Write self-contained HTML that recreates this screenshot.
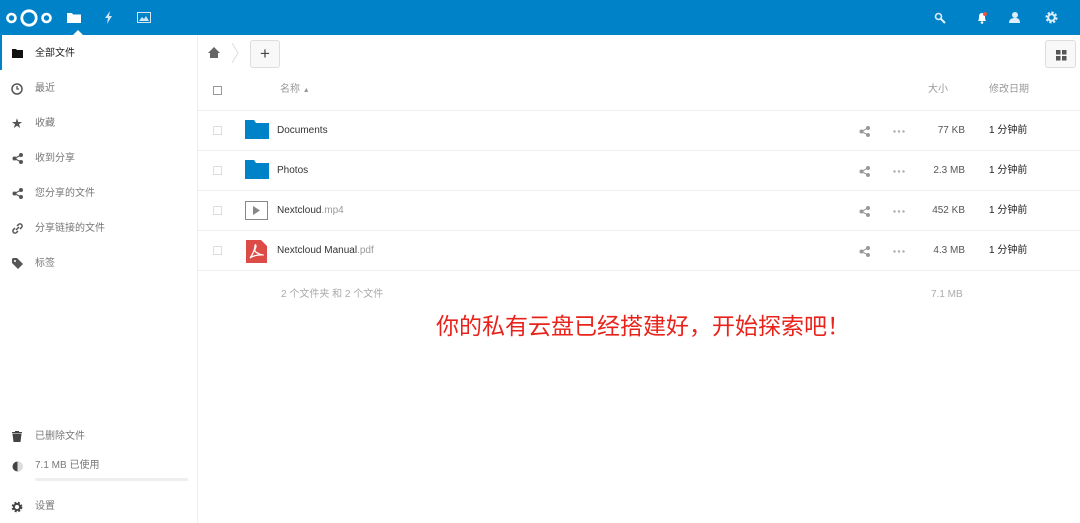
<!DOCTYPE html>
<html><head><meta charset="utf-8"><style>
*{margin:0;padding:0;box-sizing:border-box}
body{width:1080px;height:523px;overflow:hidden;background:#fff;font-family:"Liberation Sans","Noto Sans CJK SC",sans-serif;font-size:10px;line-height:12px;color:#333;position:relative}
.hdr{position:absolute;left:0;top:0;width:1080px;height:35px;background:#0082c9}
.side{position:absolute;left:0;top:35px;width:198px;height:488px;border-right:1px solid #eee}
.nav{position:absolute;left:0;height:35px;width:197px;display:flex;align-items:center;color:#777;padding-top:2px}
.nav .ic{width:12px;height:12px;margin-left:11px;margin-right:12px;display:flex;align-items:center;justify-content:center;color:#555;font-size:11px}
.abs{position:absolute}
.row{position:absolute;left:198px;width:882px;height:40px;border-bottom:1px solid #eee}
.cb{position:absolute;left:15px;top:15px;width:9px;height:9px;border:1px solid #ddd}
.nm{position:absolute;left:79px;top:13px;font-size:10px;color:#333;line-height:14px}
.sz{position:absolute;right:115px;top:13px;color:#555;line-height:14px}
.dt{position:absolute;left:791px;top:13px;color:#222;line-height:14px}
.gr{color:#999}
</style></head><body>
<div class="hdr">
<svg class="abs" style="left:4px;top:8px" width="50" height="20" viewBox="0 0 50 20"><circle cx="7.5" cy="10" r="4" fill="none" stroke="#fff" stroke-width="2.6"/><circle cx="25" cy="10" r="7.2" fill="none" stroke="#fff" stroke-width="2.8"/><circle cx="42.5" cy="10" r="4" fill="none" stroke="#fff" stroke-width="2.6"/></svg>
<svg class="abs" style="left:67px;top:12px" width="14" height="11"><path d="M0 1h5l1 1.5h8V11H0z" fill="#fff"/></svg>
<svg class="abs" style="left:73px;top:30px" width="10" height="5"><path d="M0 5L5 0L10 5z" fill="#fff"/></svg>
<svg class="abs" style="left:104px;top:11px" width="9" height="13"><path d="M6 0L1 7h3L3 13l5-8H5z" fill="#cfe6f4"/></svg>
<svg class="abs" style="left:137px;top:12px" width="14" height="11"><rect x="0.5" y="0.5" width="13" height="10" fill="none" stroke="#cfe6f4"/><path d="M2 9l3-4 2 2 2-3 3 5z" fill="#cfe6f4"/></svg>
<svg class="abs" style="left:934px;top:12px" width="12" height="12"><circle cx="4.5" cy="4.5" r="3" fill="none" stroke="#dbeefa" stroke-width="1.6"/><path d="M7 7l4 4" stroke="#dbeefa" stroke-width="2"/></svg>
<svg class="abs" style="left:976px;top:12px" width="12" height="12"><path d="M2 9c1-1 1-3 1-5a3 3 0 016 0c0 2 0 4 1 5z" fill="#fff"/><circle cx="6" cy="10.5" r="1.3" fill="#fff"/><circle cx="9" cy="2" r="2" fill="#e9573f"/></svg>
<svg class="abs" style="left:1008px;top:11px" width="13" height="13"><circle cx="7" cy="4" r="3" fill="#dbeefa"/><path d="M1 12c0-4 3-5 6-5s5 1 5 5z" fill="#dbeefa"/></svg>
<svg class="abs" style="left:1045px;top:11px" width="13" height="13" viewBox="0 0 13 13"><circle cx="6.5" cy="6.5" r="4.5" fill="none" stroke="#dbeefa" stroke-width="3" stroke-dasharray="2 1.5"/><circle cx="6.5" cy="6.5" r="3.3" fill="none" stroke="#dbeefa" stroke-width="2"/></svg>
</div>
<div class="side">
<div class="abs" style="left:0;top:0;width:2px;height:35px;background:#0082c9"></div>
<div class="nav" style="top:0;color:#222"><span class="ic"><svg width="11" height="9"><path d="M0 0h4l1 1h6v8H0z" fill="#111"/></svg></span>全部文件</div>
<div class="nav" style="top:35px"><span class="ic"><svg width="12" height="12"><circle cx="6" cy="6" r="5" fill="none" stroke="#555" stroke-width="1.5"/><path d="M6 3v3h2" stroke="#555" fill="none" stroke-width="1.3"/></svg></span>最近</div>
<div class="nav" style="top:70px"><span class="ic">★</span>收藏</div>
<div class="nav" style="top:105px"><span class="ic"><svg width="11" height="11"><circle cx="2.5" cy="5.5" r="2" fill="#555"/><circle cx="9" cy="2" r="2" fill="#555"/><circle cx="9" cy="9" r="2" fill="#555"/><path d="M2.5 5.5L9 2M2.5 5.5L9 9" stroke="#555"/></svg></span>收到分享</div>
<div class="nav" style="top:140px"><span class="ic"><svg width="11" height="11"><circle cx="2.5" cy="5.5" r="2" fill="#555"/><circle cx="9" cy="2" r="2" fill="#555"/><circle cx="9" cy="9" r="2" fill="#555"/><path d="M2.5 5.5L9 2M2.5 5.5L9 9" stroke="#555"/></svg></span>您分享的文件</div>
<div class="nav" style="top:175px"><span class="ic"><svg width="11" height="11"><path d="M4 7l3-3M3 5L1.5 6.5a2 2 0 003 3L6 8M5 3l1.5-1.5a2 2 0 013 3L8 6" stroke="#555" fill="none" stroke-width="1.5"/></svg></span>分享链接的文件</div>
<div class="nav" style="top:210px"><span class="ic"><svg width="11" height="11"><path d="M0 1v4l6 6 5-5-6-6H1z" fill="#555"/><circle cx="3" cy="3" r="1" fill="#fff"/></svg></span>标签</div>
<div class="nav" style="top:383px"><span class="ic"><svg width="10" height="11"><path d="M0 1.5h10M3.5 1V0h3v1M1 3h8l-1 8H2z" stroke="#444" fill="#444"/></svg></span>已删除文件</div>
<div class="nav" style="top:415px;height:30px;align-items:center"><span class="ic"><svg width="11" height="11"><circle cx="5.5" cy="5.5" r="5" fill="#444"/><path d="M5.5 .5a5 5 0 010 10z" fill="#ddd"/></svg></span>7.1 MB 已使用</div>
<div class="abs" style="left:35px;top:443px;width:153px;height:3px;background:#eee;border-radius:2px"></div>
<div class="nav" style="top:453px"><span class="ic"><svg width="12" height="12" viewBox="0 0 13 13"><circle cx="6.5" cy="6.5" r="4.3" fill="none" stroke="#444" stroke-width="3" stroke-dasharray="2 1.5"/><circle cx="6.5" cy="6.5" r="3.3" fill="none" stroke="#444" stroke-width="2"/></svg></span>设置</div>
</div>
<svg class="abs" style="left:208px;top:47px" width="12" height="11"><path d="M6 0L0 6h2v5h8V6h2z" fill="#666"/></svg>
<svg class="abs" style="left:231px;top:43px" width="8" height="20"><path d="M1 0l6 10-6 10" stroke="#ddd" fill="none"/></svg>
<div class="abs" style="left:250px;top:40px;width:30px;height:28px;border:1px solid #ddd;border-radius:3px;background:#f8f8f8;text-align:center;line-height:26px;font-size:17px;color:#444">+</div>
<div class="abs" style="left:1045px;top:40px;width:31px;height:28px;border:1px solid #ddd;border-radius:3px;background:#f8f8f8"><svg style="margin:9px 0 0 10px" width="11" height="11"><rect width="4.5" height="4.5" fill="#555"/><rect x="6" width="4.5" height="4.5" fill="#555"/><rect y="6" width="4.5" height="4.5" fill="#555"/><rect x="6" y="6" width="4.5" height="4.5" fill="#555"/></svg></div>
<div class="row" style="top:70px;height:41px"><div class="cb" style="top:16px;border-color:#999"></div><div class="abs gr" style="left:82px;top:13px;line-height:14px">名称 <span style="font-size:7px">▲</span></div><div class="abs gr" style="left:730px;top:13px;line-height:14px">大小</div><div class="abs gr" style="left:791px;top:13px;line-height:14px">修改日期</div></div>
<div class="row" style="top:111px"><div class="cb"></div><svg class="abs" style="left:47px;top:9px" width="24" height="19"><path d="M0 0h9l2 3h13v16H0z" fill="#0082c9"/></svg><div class="nm">Documents</div><svg class="abs" style="left:661px;top:15px" width="12" height="11"><circle cx="2.5" cy="5.5" r="2" fill="#999"/><circle cx="9" cy="2" r="2" fill="#999"/><circle cx="9" cy="9" r="2" fill="#999"/><path d="M2.5 5.5L9 2M2.5 5.5L9 9" stroke="#999"/></svg><svg class="abs" style="left:695px;top:19px" width="12" height="3"><circle cx="1.5" cy="1.5" r="1.2" fill="#aaa"/><circle cx="6" cy="1.5" r="1.2" fill="#aaa"/><circle cx="10.5" cy="1.5" r="1.2" fill="#aaa"/></svg><div class="sz">77 KB</div><div class="dt">1 分钟前</div></div>
<div class="row" style="top:151px"><div class="cb"></div><svg class="abs" style="left:47px;top:9px" width="24" height="19"><path d="M0 0h9l2 3h13v16H0z" fill="#0082c9"/></svg><div class="nm">Photos</div><svg class="abs" style="left:661px;top:15px" width="12" height="11"><circle cx="2.5" cy="5.5" r="2" fill="#999"/><circle cx="9" cy="2" r="2" fill="#999"/><circle cx="9" cy="9" r="2" fill="#999"/><path d="M2.5 5.5L9 2M2.5 5.5L9 9" stroke="#999"/></svg><svg class="abs" style="left:695px;top:19px" width="12" height="3"><circle cx="1.5" cy="1.5" r="1.2" fill="#aaa"/><circle cx="6" cy="1.5" r="1.2" fill="#aaa"/><circle cx="10.5" cy="1.5" r="1.2" fill="#aaa"/></svg><div class="sz">2.3 MB</div><div class="dt">1 分钟前</div></div>
<div class="row" style="top:191px"><div class="cb"></div><svg class="abs" style="left:47px;top:10px" width="23" height="19"><rect x="0.5" y="0.5" width="22" height="18" fill="none" stroke="#888"/><path d="M8 5v9l7-4.5z" fill="#888"/></svg><div class="nm">Nextcloud<span class="gr">.mp4</span></div><svg class="abs" style="left:661px;top:15px" width="12" height="11"><circle cx="2.5" cy="5.5" r="2" fill="#999"/><circle cx="9" cy="2" r="2" fill="#999"/><circle cx="9" cy="9" r="2" fill="#999"/><path d="M2.5 5.5L9 2M2.5 5.5L9 9" stroke="#999"/></svg><svg class="abs" style="left:695px;top:19px" width="12" height="3"><circle cx="1.5" cy="1.5" r="1.2" fill="#aaa"/><circle cx="6" cy="1.5" r="1.2" fill="#aaa"/><circle cx="10.5" cy="1.5" r="1.2" fill="#aaa"/></svg><div class="sz">452 KB</div><div class="dt">1 分钟前</div></div>
<div class="row" style="top:231px"><div class="cb"></div><svg class="abs" style="left:48px;top:9px" width="21" height="23"><path d="M0 0h15l6 6v17H0z" fill="#dc4b45"/><path d="M4 18c3-4 5-9 5-12s2 0 0 3 6 6 8 6-8-1-13 3z" fill="none" stroke="#fff" stroke-width="1.3"/></svg><div class="nm">Nextcloud Manual<span class="gr">.pdf</span></div><svg class="abs" style="left:661px;top:15px" width="12" height="11"><circle cx="2.5" cy="5.5" r="2" fill="#999"/><circle cx="9" cy="2" r="2" fill="#999"/><circle cx="9" cy="9" r="2" fill="#999"/><path d="M2.5 5.5L9 2M2.5 5.5L9 9" stroke="#999"/></svg><svg class="abs" style="left:695px;top:19px" width="12" height="3"><circle cx="1.5" cy="1.5" r="1.2" fill="#aaa"/><circle cx="6" cy="1.5" r="1.2" fill="#aaa"/><circle cx="10.5" cy="1.5" r="1.2" fill="#aaa"/></svg><div class="sz">4.3 MB</div><div class="dt">1 分钟前</div></div>
<div class="abs" style="left:281px;top:289px;color:#aaa">2 个文件夹 和 2 个文件</div>
<div class="abs" style="left:931px;top:289px;color:#aaa">7.1 MB</div>
<div class="abs" style="left:436px;top:309px;font-size:23px;line-height:30px;color:#e8231b;font-family:'Noto Sans CJK SC',sans-serif">你的私有云盘已经搭建好，开始探索吧！</div>
</body></html>
